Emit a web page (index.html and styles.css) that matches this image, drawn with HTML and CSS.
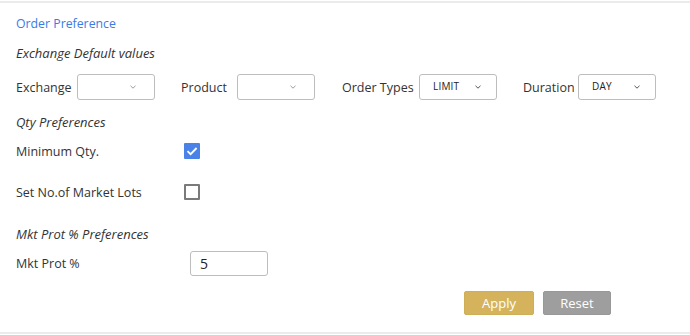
FILE: index.html
```html
<!DOCTYPE html>
<html lang="en">
<head>
    <meta charset="UTF-8">
    <meta name="viewport" content="width=device-width, initial-scale=1.0">
    <title>Order Preference</title>
    <link rel="stylesheet" href="styles.css">
</head>
<body>
    <div class="panel">
        <h2 class="title">Order Preference</h2>

        <div class="section-title">Exchange Default values</div>
        <div class="select-row">
            <div class="field">
                <label class="lbl-exchange">Exchange</label>
                <div class="select">
                    <span class="value"></span>
                    <svg class="chevron" width="6" height="4" viewBox="0 0 6 4"><path d="M0.5 0.8 L3 3.2 L5.5 0.8" fill="none" stroke="#9a9a9a" stroke-width="1"/></svg>
                </div>
            </div>
            <div class="field">
                <label class="lbl-product">Product</label>
                <div class="select">
                    <span class="value"></span>
                    <svg class="chevron" width="6" height="4" viewBox="0 0 6 4"><path d="M0.5 0.8 L3 3.2 L5.5 0.8" fill="none" stroke="#9a9a9a" stroke-width="1"/></svg>
                </div>
            </div>
            <div class="field">
                <label class="lbl-order">Order Types</label>
                <div class="select filled">
                    <span class="value">LIMIT</span>
                    <svg class="chevron" width="6" height="4" viewBox="0 0 6 4"><path d="M0.5 0.8 L3 3.2 L5.5 0.8" fill="none" stroke="#555" stroke-width="1"/></svg>
                </div>
            </div>
            <div class="field">
                <label class="lbl-duration">Duration</label>
                <div class="select filled">
                    <span class="value">DAY</span>
                    <svg class="chevron" width="6" height="4" viewBox="0 0 6 4"><path d="M0.5 0.8 L3 3.2 L5.5 0.8" fill="none" stroke="#555" stroke-width="1"/></svg>
                </div>
            </div>
        </div>

        <div class="section-title qty-title">Qty Preferences</div>
        <div class="check-row first">
            <label>Minimum Qty.</label>
            <span class="checkbox checked">
                <svg width="16" height="16" viewBox="0 0 16 16"><path d="M3.5 8.2 L6.6 11.2 L12.6 5" fill="none" stroke="#fff" stroke-width="1.8"/></svg>
            </span>
        </div>
        <div class="check-row second">
            <label>Set No.of Market Lots</label>
            <span class="checkbox"></span>
        </div>

        <div class="section-title mkt-title">Mkt Prot % Preferences</div>
        <div class="input-row">
            <label>Mkt Prot %</label>
            <input type="text" value="5">
        </div>

        <div class="actions">
            <button class="btn apply">Apply</button>
            <button class="btn reset">Reset</button>
        </div>
    </div>
</body>
</html>
```

FILE: styles.css
```css
body {
    margin: 0;
    font-family: "Open Sans", Arial, sans-serif;
    color: #333;
    background: #fff;
}
.panel {
    margin-top: 1px;
    border-top: 2px solid #ebebeb;
    border-bottom: 2px solid #ebebeb;
    padding: 11px 16px 17px;
}
.title {
    margin: 0;
    font-size: 12.3px;
    line-height: 20px;
    font-weight: normal;
    color: #3a7be6;
}
.section-title {
    margin-top: 10px;
    font-size: 13px;
    line-height: 18px;
    font-style: italic;
    color: #333;
}
.select-row {
    display: flex;
    gap: 26px;
    margin-top: 12px;
}
.field {
    display: flex;
    align-items: center;
    gap: 8px;
}
.field label {
    font-size: 12.5px;
    white-space: nowrap;
}
.lbl-exchange { width: 53px; }
.lbl-product { width: 48px; }
.lbl-order { width: 69px; }
.lbl-duration { width: 47px; }
.field:nth-child(3) {
    margin-left: 1px;
}
.select {
    width: 78px;
    height: 26px;
    box-sizing: border-box;
    border: 1px solid #bdbdbd;
    border-radius: 3px;
    display: flex;
    align-items: center;
    justify-content: space-between;
    padding: 0 18px 0 13px;
}
.select.filled {
    padding-right: 15px;
}
.select .value {
    font-size: 10px;
    letter-spacing: 0.2px;
    color: #222;
    margin-top: -2px;
}
.chevron {
    display: block;
}
.qty-title {
    margin-top: 13px;
}
.check-row {
    display: flex;
    align-items: center;
    height: 16px;
}
.check-row.first {
    margin-top: 12px;
}
.check-row.second {
    margin-top: 25px;
}
.check-row label,
.input-row label {
    font-size: 12.5px;
    width: 168px;
}
.checkbox {
    width: 16px;
    height: 16px;
    box-sizing: border-box;
    border: 2px solid #7a7a7a;
    border-radius: 1px;
}
.checkbox.checked {
    border: none;
    background: #4a82e8;
}
.checkbox svg {
    display: block;
}
.mkt-title {
    margin-top: 25px;
}
.input-row {
    display: flex;
    align-items: center;
    margin-top: 8px;
}
.input-row label {
    width: 174px;
}
.input-row input {
    width: 78px;
    height: 25px;
    box-sizing: border-box;
    border: 1px solid #bdbdbd;
    border-radius: 3px;
    padding: 0 9px;
    font-family: "Open Sans", Arial, sans-serif;
    font-size: 14px;
    color: #222;
}
.actions {
    display: flex;
    justify-content: flex-end;
    gap: 9px;
    margin-top: 15px;
    padding-right: 63px;
}
.btn {
    width: 70px;
    height: 24px;
    border: 1px solid transparent;
    border-radius: 2px;
    font-family: "Open Sans", Arial, sans-serif;
    font-size: 13px;
    color: #fff;
    padding: 0;
}
.apply {
    background: #d5b35d;
    border-color: #cfae58;
}
.reset {
    width: 68px;
    background: #9e9e9e;
    border-color: #989898;
}
```
